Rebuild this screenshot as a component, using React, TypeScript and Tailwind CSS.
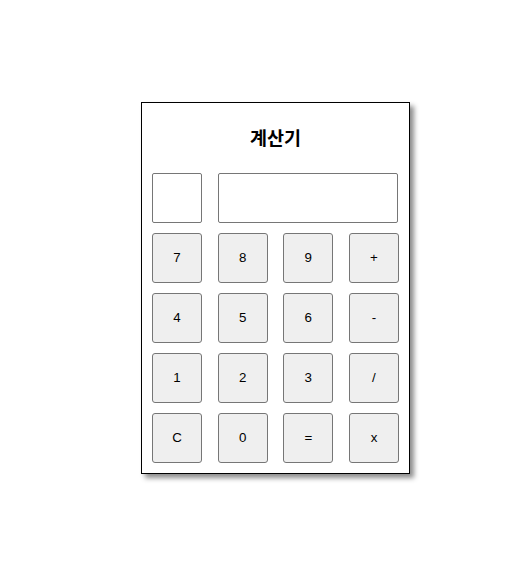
import React from "react";

const rows = [
  ["7", "8", "9", "+"],
  ["4", "5", "6", "-"],
  ["1", "2", "3", "/"],
  ["C", "0", "=", "x"],
];

export default function App() {
  return (
    <div className="w-[529px] h-[579px] bg-white pt-[102px] pl-[141px]" style={{ fontFamily: '"Liberation Sans", Arial, sans-serif' }}>
      <div className="w-[269px] h-[372px] border border-black bg-white shadow-[4px_4px_5px_rgba(0,0,0,0.45)] px-[10px] flex flex-col">
        <div className="h-[70px] flex items-center justify-center">
          <h2 className="text-[18.5px] font-bold text-black" style={{ fontFamily: '"Noto Sans CJK KR", "Noto Sans", sans-serif' }}>계산기</h2>
        </div>
        <div className="flex">
          <input className="w-[50px] h-[50px] border border-[#767676] rounded-[2px] bg-white outline-none" />
          <input className="ml-[16px] w-[180px] h-[50px] border border-[#767676] rounded-[2px] bg-white outline-none" />
        </div>
        <div className="mt-[10px] grid grid-cols-[50px_50px_50px_50px] justify-between gap-y-[10px]">
          {rows.flat().map((k) => (
            <button key={k} className="w-[50px] h-[50px] bg-[#efefef] border border-[#767676] rounded-[3px] text-[13.33px] text-black flex items-center justify-center">
              {k}
            </button>
          ))}
        </div>
      </div>
    </div>
  );
}
